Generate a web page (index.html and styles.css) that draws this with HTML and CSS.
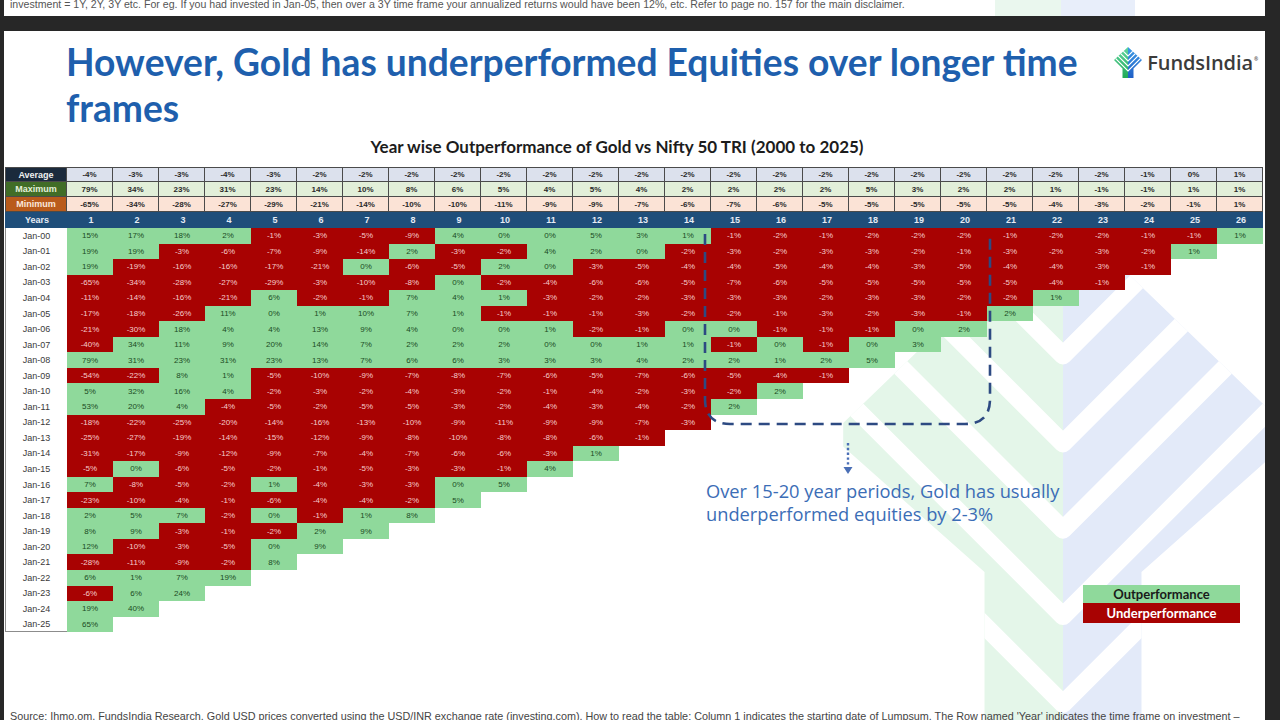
FILE: index.html
```html
<!DOCTYPE html>
<html lang="en">
<head>
<meta charset="utf-8">
<title>Gold vs Nifty 50 TRI</title>
<link rel="stylesheet" href="styles.css">
</head>
<body>
<div class="prev"><p>investment = 1Y, 2Y, 3Y etc. For eg. If you had invested in Jan-05, then over a 3Y time frame your annualized returns would have been 12%, etc. Refer to page no. 157 for the main disclaimer.</p></div>
<div class="gap"></div>
<div class="slide">
  <svg class="wm" viewBox="0 0 1261 689" width="1261" height="689" aria-hidden="true">
    <defs>
      <clipPath id="wmclip"><path transform="translate(839.2 180) scale(15.7)" d="M14 0 L28 13.5 L28 15 L19 23 L19 40 L9 40 L9 23 L0 15 L0 13.5 Z"/></clipPath>
    </defs>
    <g clip-path="url(#wmclip)">
      <rect x="800" y="150" width="259" height="560" fill="#e4f6e9"/>
      <rect x="1059" y="150" width="260" height="560" fill="#e3eaf9"/>
      <g transform="translate(839.2 180) scale(15.7)" fill="none" stroke="#ffffff" stroke-width="1.15" stroke-linejoin="round">
        <polyline points="0,-4.8 14,9.2 28,-4.8"/>
        <polyline points="0,0.8 14,14.8 28,0.8"/>
        <polyline points="0,6.3 14,20.3 28,6.3"/>
        <polyline points="0,11.8 14,25.8 28,11.8"/>
        <polyline points="0,17.4 14,31.4 28,17.4"/>
      </g>
    </g>
  </svg>

  <header class="head">
    <h1 class="title">However, Gold has underperformed Equities over longer time frames</h1>
    <div class="logo">
      <svg class="logo-ic" viewBox="0 0 28 31" width="28" height="31" aria-hidden="true">
        <defs>
          <clipPath id="icclip"><path d="M14 0 L28 13 L19.5 21.5 L19.5 31 L8.5 31 L8.5 21.5 L0 13 Z"/></clipPath>
          <linearGradient id="icg" x1="0" y1="0" x2="0" y2="1"><stop offset="0" stop-color="#5fd6a0"/><stop offset="1" stop-color="#21a956"/></linearGradient>
          <linearGradient id="icb" x1="0" y1="0" x2="0" y2="1"><stop offset="0" stop-color="#3c9be6"/><stop offset="1" stop-color="#1f5fc6"/></linearGradient>
        </defs>
        <g clip-path="url(#icclip)">
          <rect x="0" y="0" width="14" height="31" fill="url(#icg)"/>
          <rect x="14" y="0" width="14" height="31" fill="url(#icb)"/>
          <g fill="none" stroke="#ffffff" stroke-width="1.1">
            <polyline points="0,-5 14,9 28,-5"/>
            <polyline points="0,0 14,14 28,0"/>
            <polyline points="0,5 14,19 28,5"/>
            <polyline points="0,10 14,24 28,10"/>
          </g>
        </g>
      </svg>
      <span class="logo-tx">FundsIndia<sup>®</sup></span>
    </div>
  </header>

  <h2 class="sub">Year wise Outperformance of Gold vs Nifty 50 TRI (2000 to 2025)</h2>

  <div class="tbl">
    <div class="hrow avg first"><span class="hl">Average</span><span>-4%</span><span>-3%</span><span>-3%</span><span>-4%</span><span>-3%</span><span>-2%</span><span>-2%</span><span>-2%</span><span>-2%</span><span>-2%</span><span>-2%</span><span>-2%</span><span>-2%</span><span>-2%</span><span>-2%</span><span>-2%</span><span>-2%</span><span>-2%</span><span>-2%</span><span>-2%</span><span>-2%</span><span>-2%</span><span>-2%</span><span>-1%</span><span>0%</span><span>1%</span></div>
    <div class="hrow max"><span class="hl">Maximum</span><span>79%</span><span>34%</span><span>23%</span><span>31%</span><span>23%</span><span>14%</span><span>10%</span><span>8%</span><span>6%</span><span>5%</span><span>4%</span><span>5%</span><span>4%</span><span>2%</span><span>2%</span><span>2%</span><span>2%</span><span>5%</span><span>3%</span><span>2%</span><span>2%</span><span>1%</span><span>-1%</span><span>-1%</span><span>1%</span><span>1%</span></div>
    <div class="hrow min"><span class="hl">Minimum</span><span>-65%</span><span>-34%</span><span>-28%</span><span>-27%</span><span>-29%</span><span>-21%</span><span>-14%</span><span>-10%</span><span>-10%</span><span>-11%</span><span>-9%</span><span>-9%</span><span>-7%</span><span>-6%</span><span>-7%</span><span>-6%</span><span>-5%</span><span>-5%</span><span>-5%</span><span>-5%</span><span>-5%</span><span>-4%</span><span>-3%</span><span>-2%</span><span>-1%</span><span>1%</span></div>
    <div class="yrow"><span>Years</span><span>1</span><span>2</span><span>3</span><span>4</span><span>5</span><span>6</span><span>7</span><span>8</span><span>9</span><span>10</span><span>11</span><span>12</span><span>13</span><span>14</span><span>15</span><span>16</span><span>17</span><span>18</span><span>19</span><span>20</span><span>21</span><span>22</span><span>23</span><span>24</span><span>25</span><span>26</span></div>

    <div class="brow"><span class="lb">Jan-00</span><span class="g">15%</span><span class="g">17%</span><span class="g">18%</span><span class="g">2%</span><span class="r">-1%</span><span class="r">-3%</span><span class="r">-5%</span><span class="r">-9%</span><span class="g">4%</span><span class="g">0%</span><span class="g">0%</span><span class="g">5%</span><span class="g">3%</span><span class="g">1%</span><span class="r">-1%</span><span class="r">-2%</span><span class="r">-1%</span><span class="r">-2%</span><span class="r">-2%</span><span class="r">-2%</span><span class="r">-1%</span><span class="r">-2%</span><span class="r">-2%</span><span class="r">-1%</span><span class="r">-1%</span><span class="g">1%</span></div>
    <div class="brow"><span class="lb">Jan-01</span><span class="g">19%</span><span class="g">19%</span><span class="r">-3%</span><span class="r">-6%</span><span class="r">-7%</span><span class="r">-9%</span><span class="r">-14%</span><span class="g">2%</span><span class="r">-3%</span><span class="r">-2%</span><span class="g">4%</span><span class="g">2%</span><span class="g">0%</span><span class="r">-2%</span><span class="r">-3%</span><span class="r">-2%</span><span class="r">-3%</span><span class="r">-3%</span><span class="r">-2%</span><span class="r">-1%</span><span class="r">-3%</span><span class="r">-2%</span><span class="r">-3%</span><span class="r">-2%</span><span class="g">1%</span></div>
    <div class="brow"><span class="lb">Jan-02</span><span class="g">19%</span><span class="r">-19%</span><span class="r">-16%</span><span class="r">-16%</span><span class="r">-17%</span><span class="r">-21%</span><span class="g">0%</span><span class="r">-6%</span><span class="r">-5%</span><span class="g">2%</span><span class="g">0%</span><span class="r">-3%</span><span class="r">-5%</span><span class="r">-4%</span><span class="r">-4%</span><span class="r">-5%</span><span class="r">-4%</span><span class="r">-4%</span><span class="r">-3%</span><span class="r">-5%</span><span class="r">-4%</span><span class="r">-4%</span><span class="r">-3%</span><span class="r">-1%</span></div>
    <div class="brow"><span class="lb">Jan-03</span><span class="r">-65%</span><span class="r">-34%</span><span class="r">-28%</span><span class="r">-27%</span><span class="r">-29%</span><span class="r">-3%</span><span class="r">-10%</span><span class="r">-8%</span><span class="g">0%</span><span class="r">-2%</span><span class="r">-4%</span><span class="r">-6%</span><span class="r">-6%</span><span class="r">-5%</span><span class="r">-7%</span><span class="r">-6%</span><span class="r">-5%</span><span class="r">-5%</span><span class="r">-5%</span><span class="r">-5%</span><span class="r">-5%</span><span class="r">-4%</span><span class="r">-1%</span></div>
    <div class="brow"><span class="lb">Jan-04</span><span class="r">-11%</span><span class="r">-14%</span><span class="r">-16%</span><span class="r">-21%</span><span class="g">6%</span><span class="r">-2%</span><span class="r">-1%</span><span class="g">7%</span><span class="g">4%</span><span class="g">1%</span><span class="r">-3%</span><span class="r">-2%</span><span class="r">-2%</span><span class="r">-3%</span><span class="r">-3%</span><span class="r">-3%</span><span class="r">-2%</span><span class="r">-3%</span><span class="r">-3%</span><span class="r">-2%</span><span class="r">-2%</span><span class="g">1%</span></div>
    <div class="brow"><span class="lb">Jan-05</span><span class="r">-17%</span><span class="r">-18%</span><span class="r">-26%</span><span class="g">11%</span><span class="g">0%</span><span class="g">1%</span><span class="g">10%</span><span class="g">7%</span><span class="g">1%</span><span class="r">-1%</span><span class="r">-1%</span><span class="r">-1%</span><span class="r">-3%</span><span class="r">-2%</span><span class="r">-2%</span><span class="r">-1%</span><span class="r">-3%</span><span class="r">-2%</span><span class="r">-3%</span><span class="r">-1%</span><span class="g">2%</span></div>
    <div class="brow"><span class="lb">Jan-06</span><span class="r">-21%</span><span class="r">-30%</span><span class="g">18%</span><span class="g">4%</span><span class="g">4%</span><span class="g">13%</span><span class="g">9%</span><span class="g">4%</span><span class="g">0%</span><span class="g">0%</span><span class="g">1%</span><span class="r">-2%</span><span class="r">-1%</span><span class="g">0%</span><span class="g">0%</span><span class="r">-1%</span><span class="r">-1%</span><span class="r">-1%</span><span class="g">0%</span><span class="g">2%</span></div>
    <div class="brow"><span class="lb">Jan-07</span><span class="r">-40%</span><span class="g">34%</span><span class="g">11%</span><span class="g">9%</span><span class="g">20%</span><span class="g">14%</span><span class="g">7%</span><span class="g">2%</span><span class="g">2%</span><span class="g">2%</span><span class="g">0%</span><span class="g">0%</span><span class="g">1%</span><span class="g">1%</span><span class="r">-1%</span><span class="g">0%</span><span class="r">-1%</span><span class="g">0%</span><span class="g">3%</span></div>
    <div class="brow"><span class="lb">Jan-08</span><span class="g">79%</span><span class="g">31%</span><span class="g">23%</span><span class="g">31%</span><span class="g">23%</span><span class="g">13%</span><span class="g">7%</span><span class="g">6%</span><span class="g">6%</span><span class="g">3%</span><span class="g">3%</span><span class="g">3%</span><span class="g">4%</span><span class="g">2%</span><span class="g">2%</span><span class="g">1%</span><span class="g">2%</span><span class="g">5%</span></div>
    <div class="brow"><span class="lb">Jan-09</span><span class="r">-54%</span><span class="r">-22%</span><span class="g">8%</span><span class="g">1%</span><span class="r">-5%</span><span class="r">-10%</span><span class="r">-9%</span><span class="r">-7%</span><span class="r">-8%</span><span class="r">-7%</span><span class="r">-6%</span><span class="r">-5%</span><span class="r">-7%</span><span class="r">-6%</span><span class="r">-5%</span><span class="r">-4%</span><span class="r">-1%</span></div>
    <div class="brow"><span class="lb">Jan-10</span><span class="g">5%</span><span class="g">32%</span><span class="g">16%</span><span class="g">4%</span><span class="r">-2%</span><span class="r">-3%</span><span class="r">-2%</span><span class="r">-4%</span><span class="r">-3%</span><span class="r">-2%</span><span class="r">-1%</span><span class="r">-4%</span><span class="r">-2%</span><span class="r">-3%</span><span class="r">-2%</span><span class="g">2%</span></div>
    <div class="brow"><span class="lb">Jan-11</span><span class="g">53%</span><span class="g">20%</span><span class="g">4%</span><span class="r">-4%</span><span class="r">-5%</span><span class="r">-2%</span><span class="r">-5%</span><span class="r">-5%</span><span class="r">-3%</span><span class="r">-2%</span><span class="r">-4%</span><span class="r">-3%</span><span class="r">-4%</span><span class="r">-2%</span><span class="g">2%</span></div>
    <div class="brow"><span class="lb">Jan-12</span><span class="r">-18%</span><span class="r">-22%</span><span class="r">-25%</span><span class="r">-20%</span><span class="r">-14%</span><span class="r">-16%</span><span class="r">-13%</span><span class="r">-10%</span><span class="r">-9%</span><span class="r">-11%</span><span class="r">-9%</span><span class="r">-9%</span><span class="r">-7%</span><span class="r">-3%</span></div>
    <div class="brow"><span class="lb">Jan-13</span><span class="r">-25%</span><span class="r">-27%</span><span class="r">-19%</span><span class="r">-14%</span><span class="r">-15%</span><span class="r">-12%</span><span class="r">-9%</span><span class="r">-8%</span><span class="r">-10%</span><span class="r">-8%</span><span class="r">-8%</span><span class="r">-6%</span><span class="r">-1%</span></div>
    <div class="brow"><span class="lb">Jan-14</span><span class="r">-31%</span><span class="r">-17%</span><span class="r">-9%</span><span class="r">-12%</span><span class="r">-9%</span><span class="r">-7%</span><span class="r">-4%</span><span class="r">-7%</span><span class="r">-6%</span><span class="r">-6%</span><span class="r">-3%</span><span class="g">1%</span></div>
    <div class="brow"><span class="lb">Jan-15</span><span class="r">-5%</span><span class="g">0%</span><span class="r">-6%</span><span class="r">-5%</span><span class="r">-2%</span><span class="r">-1%</span><span class="r">-5%</span><span class="r">-3%</span><span class="r">-3%</span><span class="r">-1%</span><span class="g">4%</span></div>
    <div class="brow"><span class="lb">Jan-16</span><span class="g">7%</span><span class="r">-8%</span><span class="r">-5%</span><span class="r">-2%</span><span class="g">1%</span><span class="r">-4%</span><span class="r">-3%</span><span class="r">-3%</span><span class="g">0%</span><span class="g">5%</span></div>
    <div class="brow"><span class="lb">Jan-17</span><span class="r">-23%</span><span class="r">-10%</span><span class="r">-4%</span><span class="r">-1%</span><span class="r">-6%</span><span class="r">-4%</span><span class="r">-4%</span><span class="r">-2%</span><span class="g">5%</span></div>
    <div class="brow"><span class="lb">Jan-18</span><span class="g">2%</span><span class="g">5%</span><span class="g">7%</span><span class="r">-2%</span><span class="g">0%</span><span class="r">-1%</span><span class="g">1%</span><span class="g">8%</span></div>
    <div class="brow"><span class="lb">Jan-19</span><span class="g">8%</span><span class="g">9%</span><span class="r">-3%</span><span class="r">-1%</span><span class="r">-2%</span><span class="g">2%</span><span class="g">9%</span></div>
    <div class="brow"><span class="lb">Jan-20</span><span class="g">12%</span><span class="r">-10%</span><span class="r">-3%</span><span class="r">-5%</span><span class="g">0%</span><span class="g">9%</span></div>
    <div class="brow"><span class="lb">Jan-21</span><span class="r">-28%</span><span class="r">-11%</span><span class="r">-9%</span><span class="r">-2%</span><span class="g">8%</span></div>
    <div class="brow"><span class="lb">Jan-22</span><span class="g">6%</span><span class="g">1%</span><span class="g">7%</span><span class="g">19%</span></div>
    <div class="brow"><span class="lb">Jan-23</span><span class="r">-6%</span><span class="g">6%</span><span class="g">24%</span></div>
    <div class="brow"><span class="lb">Jan-24</span><span class="g">19%</span><span class="g">40%</span></div>
    <div class="brow last"><span class="lb">Jan-25</span><span class="g">65%</span></div>
  </div>

  <svg class="ann" viewBox="0 0 1261 689" width="1261" height="689" aria-hidden="true">
    <path d="M701 203 V368 Q701 393 726 393 H961 Q986 393 986 368 V203" fill="none" stroke="#2d4a82" stroke-width="2.6" stroke-dasharray="11 7"/>
    <line x1="844" y1="412" x2="844" y2="435" stroke="#4a6fb6" stroke-width="2.4" stroke-dasharray="2.4 2.4"/>
    <polygon points="839.5,436 848.5,436 844,443" fill="#4a6fb6"/>
  </svg>

  <p class="note">Over 15-20 year periods, Gold has usually<br>underperformed equities by 2-3%</p>

  <div class="legend">
    <div class="lg lg-g">Outperformance</div>
    <div class="lg lg-r">Underperformance</div>
  </div>

  <p class="src">Source: Ihmo.om, FundsIndia Research. Gold USD prices converted using the USD/INR exchange rate (investing.com). How to read the table: Column 1 indicates the starting date of Lumpsum. The Row named 'Year' indicates the time frame on investment –</p>
</div>
</body>
</html>
```

FILE: styles.css
```css
* { box-sizing: border-box; }

html, body {
  margin: 0;
  padding: 0;
}

body {
  width: 1280px;
  height: 720px;
  overflow: hidden;
  background: #272727;
  font-family: "Liberation Sans", Arial, sans-serif;
}

.prev {
  margin-left: 4px;
  width: 1261px;
  height: 16px;
  overflow: hidden;
  background: linear-gradient(to right, #ffffff 991px, #eaf7ee 991px, #eaf7ee 1057px, #e8eefa 1057px, #e8eefa 1131px, #ffffff 1131px);
}

.prev p {
  margin: -2px 0 0 6px;
  font-size: 10.6px;
  line-height: 12px;
  color: #555;
  white-space: nowrap;
}

.gap { height: 15px; }

.slide {
  position: relative;
  z-index: 0;
  margin-left: 4px;
  width: 1261px;
  height: 689px;
  background: #ffffff;
  overflow: hidden;
}

.wm {
  position: absolute;
  left: 0;
  top: 0;
  z-index: -1;
}

.head {
  display: flex;
  align-items: flex-start;
  padding: 8px 7px 0 62px;
}

.title {
  flex: 0 0 1040px;
  margin: 0;
  font-family: "Lato", "Liberation Sans", sans-serif;
  font-weight: 700;
  font-size: 37.2px;
  line-height: 46px;
  color: #1e5fad;
}

.logo {
  margin-left: auto;
  margin-top: 8px;
  display: flex;
  align-items: center;
  gap: 5px;
}

.logo-ic { display: block; }

.logo-tx {
  font-family: "Open Sans", sans-serif;
  font-weight: 600;
  font-size: 20px;
  color: #3b3b3b;
  letter-spacing: -0.1px;
}

.logo-tx sup {
  font-size: 5px;
  vertical-align: 9px;
  margin-left: 1px;
}

.sub {
  margin: 6px 0 0;
  padding-right: 35px;
  text-align: center;
  font-family: "Lato", "Liberation Sans", sans-serif;
  font-weight: 700;
  font-size: 17px;
  line-height: 20px;
  color: #1c1c1c;
}

.tbl {
  margin: 10px 0 0 1px;
  width: 1258px;
}

.hrow, .yrow, .brow {
  display: grid;
  grid-template-columns: 62px repeat(26, 46px);
}

.hrow { height: 15px; }

.hrow > span {
  display: flex;
  align-items: center;
  justify-content: center;
  border-right: 1px solid #4b4b4b;
  border-bottom: 1px solid #4b4b4b;
  font-size: 8px;
  font-weight: 700;
  color: #2a2a2a;
}

.hrow > span:first-child { border-left: 1px solid #4b4b4b; }
.hrow.first > span { border-top: 1px solid #4b4b4b; }

.hrow > .hl {
  font-size: 9px;
  color: #f0f0f0;
}

.avg > span { background: #dce1ed; }
.avg > .hl { background: #1b2a3c; }
.max > span { background: #e2efd9; }
.max > .hl { background: #416d27; color: #e4f0da; }
.min > span { background: #fbe3d6; }
.min > .hl { background: #b95b1b; color: #fbe8dc; }

.yrow {
  height: 16px;
  background: #1f4e7a;
  border-left: 1px solid #1f4e7a;
}

.yrow > span {
  display: flex;
  align-items: center;
  justify-content: center;
  font-size: 9px;
  font-weight: 700;
  color: #e6ecf5;
}

.brow { height: 15.55px; }

.brow > span {
  display: flex;
  align-items: center;
  justify-content: center;
  font-size: 8px;
}

.brow > .lb {
  background: #ffffff;
  border-left: 1px solid #8c8c8c;
  font-size: 9px;
  color: #3a3a3a;
}

.brow.last > .lb { border-bottom: 1px solid #8c8c8c; }

.g { background: #8fd99b; color: #1b4b1f; }
.r { background: #a80202; color: #f5cccc; }

.ann {
  position: absolute;
  left: 0;
  top: 0;
  pointer-events: none;
}

.note {
  position: absolute;
  left: 702px;
  top: 448px;
  margin: 0;
  font-family: "Open Sans", sans-serif;
  font-size: 18.3px;
  line-height: 23px;
  color: #3b6db6;
}

.legend {
  position: absolute;
  left: 1079px;
  top: 554px;
  width: 157px;
}

.lg {
  text-align: center;
  font-family: "Lato", "Liberation Sans", sans-serif;
  font-weight: 700;
  font-size: 13px;
}

.lg-g { height: 18px; line-height: 18px; background: #8fd99b; color: #1a1a1a; }
.lg-r { height: 20px; line-height: 20px; background: #a80202; color: #ffffff; }

.src {
  margin: 78px 0 0 6px;
  font-size: 10.8px;
  line-height: 12px;
  color: #444;
  white-space: nowrap;
}
```
